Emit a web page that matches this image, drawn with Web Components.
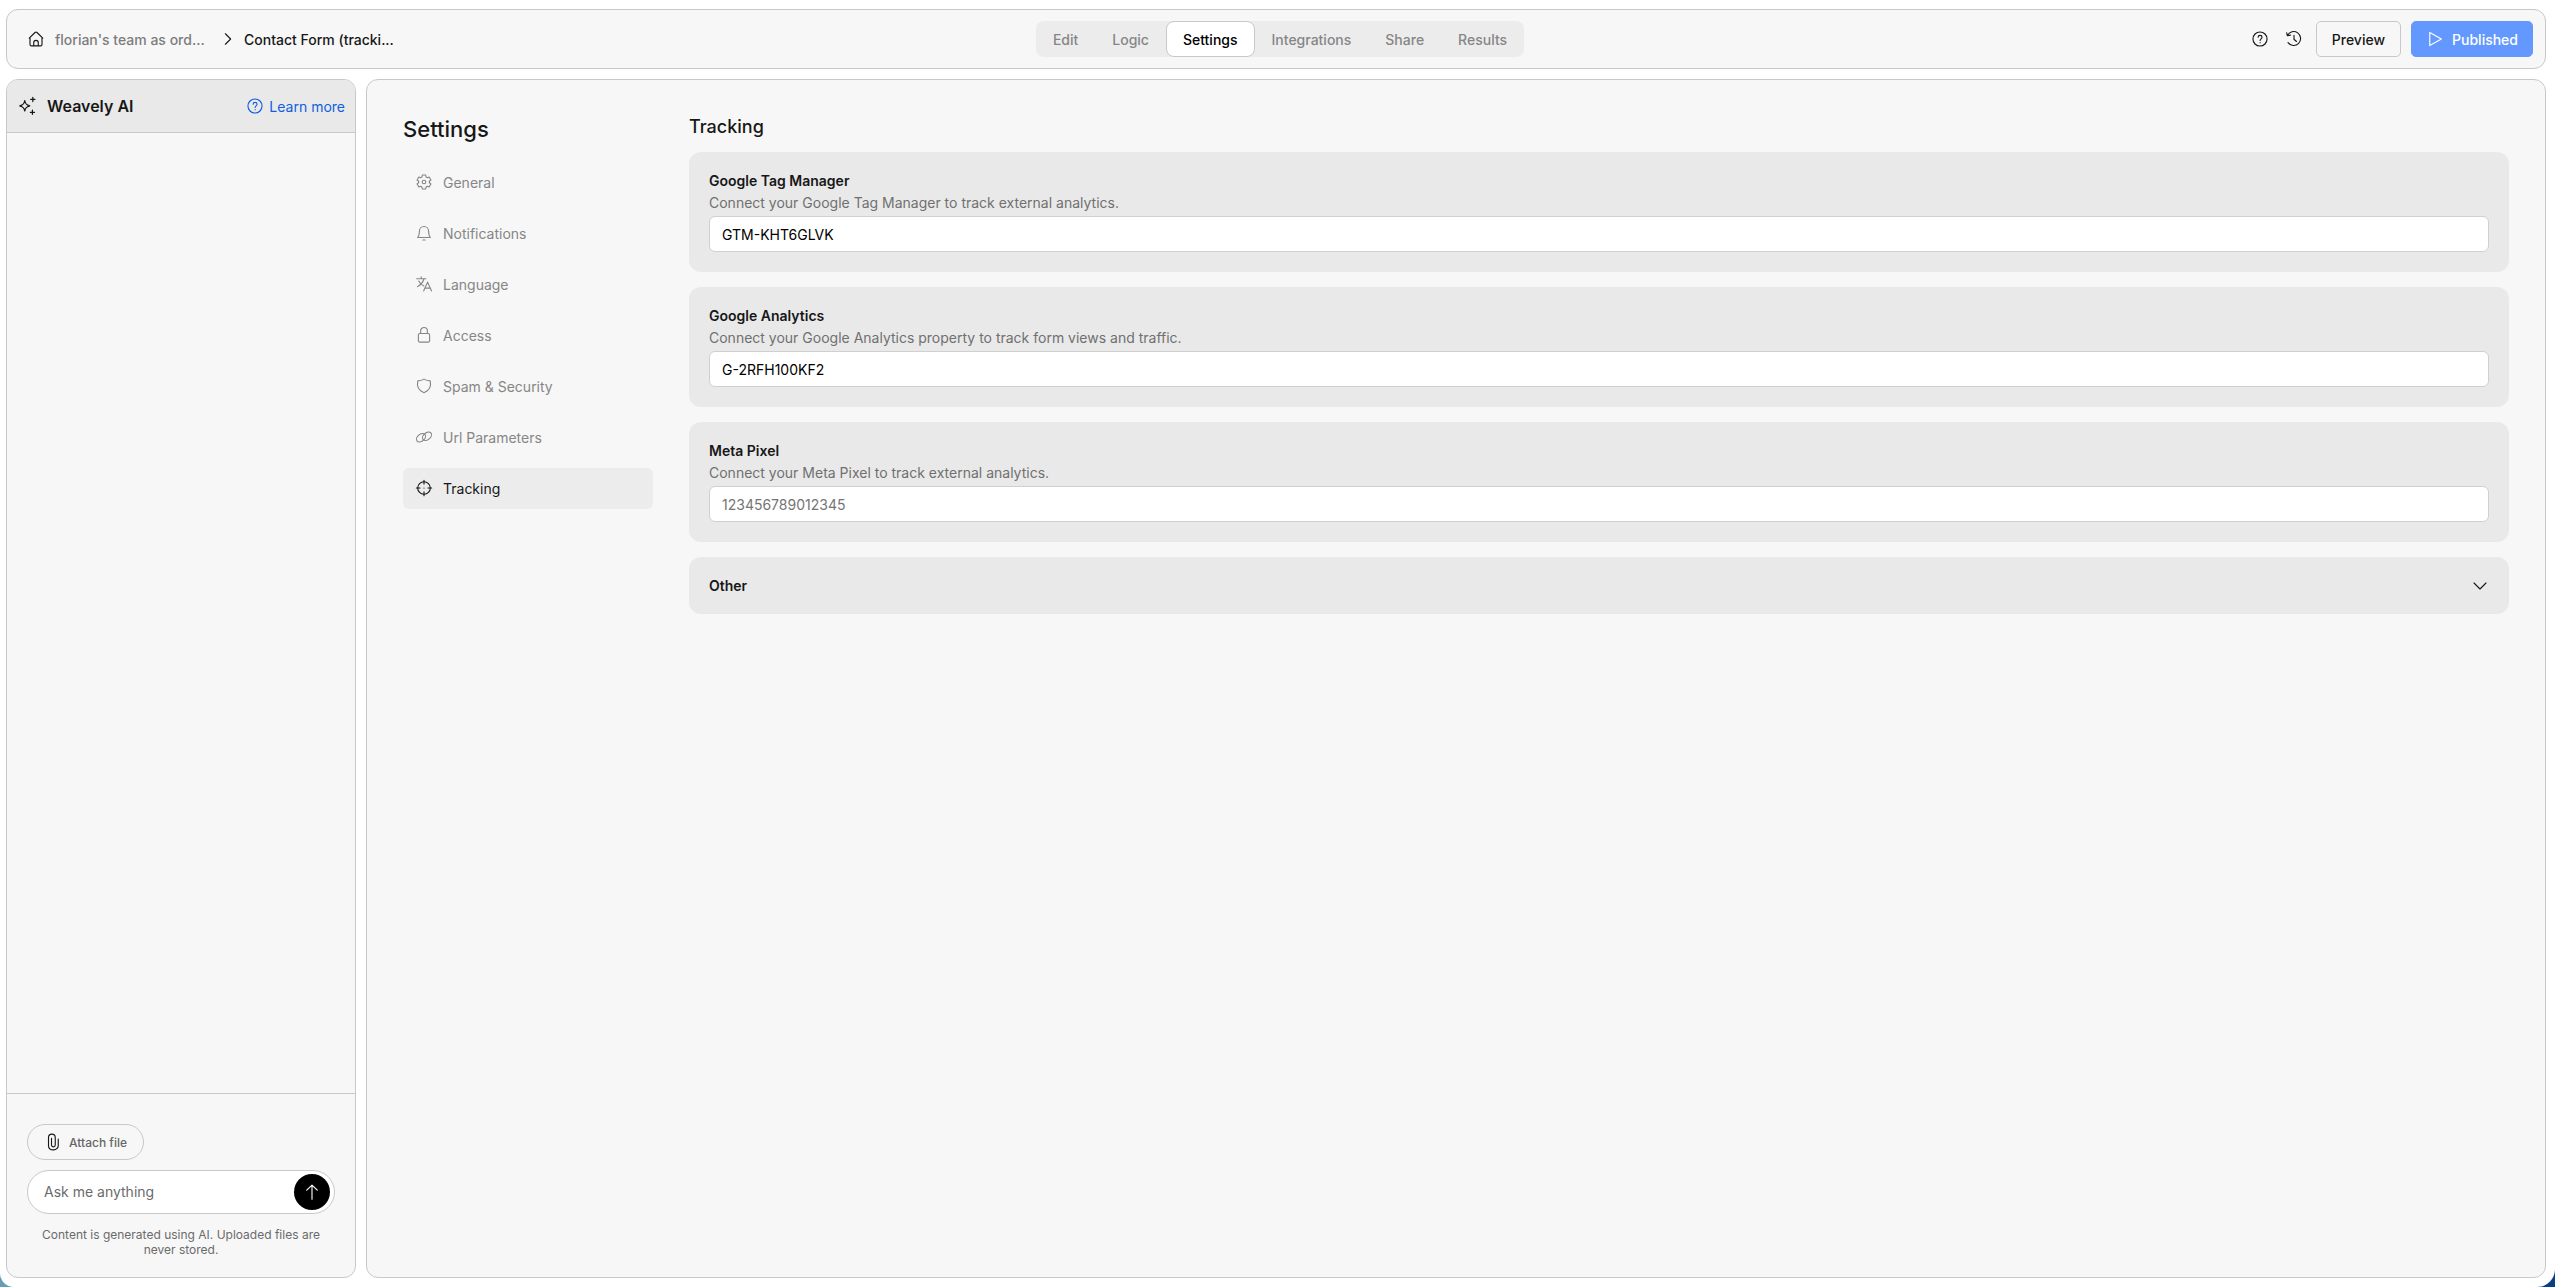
<!DOCTYPE html>
<html lang="en">
<head>
<meta charset="utf-8">
<meta name="viewport" content="width=device-width, initial-scale=1">
<title>Contact Form - Settings</title>
<style>
    html { height: 100%; background: linear-gradient(90deg, #669db6 50%, #0b3f85 50%); }
    body {
        margin: 0;
        min-height: 100%;
        display: flex;
        font-family: Inter, "Liberation Sans", sans-serif;
        font-size: 14px;
        line-height: 17px;
        color: #171717;
        --panel: #f7f7f7;
        --fill: #e9e9e9;
        --line: #c8c8c8;
        --muted: #868686;
    }
</style>
</head>
<body>
<form-app></form-app>

<script>
(function() {
    const ICONS = {
        home: '<path d="M3 10.8L10.7 3.3a1.9 1.9 0 0 1 2.6 0L21 10.8M4 10v9.3a1.9 1.9 0 0 0 1.9 1.9h12.2a1.9 1.9 0 0 0 1.9-1.9V10M9 21v-4.2a3 3 0 0 1 6 0V21"/>',
        right: '<path d="M8.5 5l7 7-7 7"/>',
        down: '<path d="M4 8l8 8 8-8"/>',
        help: '<circle cx="12" cy="12" r="9.4"/><path d="M9.5 9.7c0-3.3 5.2-3.3 5.2 0 0 2.2-2.5 2.1-2.5 4.3M12.2 16.6v.4"/>',
        history: '<path d="M3.2 7.2A9.3 9.3 0 1 1 4 16.8M2.2 3.6l.9 4 4.3-.8M12 7v5.3l3.3 3"/>',
        play: '<path d="M5 3.2v17.6L20.5 12z"/>',
        sparks: '<path d="M9.3 5.6c.8 4 1.9 5.2 6 6.2-4.1 1-5.2 2.2-6 6.2-.8-4-1.9-5.2-6-6.2 4.1-1 5.2-2.2 6-6.2zM19 1.6v5M16.5 4.1h5M18.5 17v5M16 19.5h5"/>',
        gear: '<path d="M9.3 5.32L9.68 2.69H14.32L14.7 5.32L16.43 6.33L18.91 5.33L21.23 9.35L19.13 11V13L21.23 14.65L18.91 18.67L16.43 17.67L14.7 18.68L14.32 21.31H9.68L9.3 18.68L7.57 17.67L5.09 18.67L2.77 14.65L4.87 13V11L2.77 9.35L5.09 5.33L7.57 6.33Z"/><circle cx="12" cy="12" r="2.4"/>',
        bell: '<path d="M3.6 18c1.7-1.8 2.3-3.6 2.3-8.5a6.1 6.1 0 0 1 12.2 0c0 4.9.6 6.7 2.3 8.5zM10.4 21.4h3.2"/>',
        language: '<path d="M2.2 5h12.2M8.3 2.5V5M12 5c-1.3 4.6-4.4 8.2-8.7 10.5M5 8c1.5 3.2 3.8 5.3 6.8 6.8M11.5 21.3L16.8 9.5l5.3 11.8M13.3 17.5h7"/>',
        lock: '<rect x="4.5" y="10" width="15" height="11.5" rx="2"/><path d="M7.5 10V6.500a4.500 4.500 0 0 1 9 0V10"/>',
        shield: '<path d="M12 2.8c2.3 1.5 4.9 2.2 8.3 2.4 1.6 7.3-1.8 13.2-8.3 15.8C5.5 18.4 2.1 12.5 3.7 5.2 7.1 5 9.7 4.3 12 2.8z"/>',
        link: '<ellipse cx="8" cy="13" rx="6.8" ry="4.6" transform="rotate(-40 8 13)"/><ellipse cx="16" cy="11" rx="6.8" ry="4.6" transform="rotate(-40 16 11)"/>',
        target: '<circle cx="12" cy="12" r="8.4"/><path d="M12 1.8v5M12 17.2v5M1.8 12h5M17.2 12h5M12 12v.1"/>',
        clip: '<path d="M19 8v8.5a6 6 0 0 1-6.5 6c-4 0-6.5-2.5-6.5-6V6a4.5 4.5 0 0 1 9 0v10a2.5 2.5 0 0 1-5 0V7"/>',
        up: '<path d="M12 21.5V3M5 9.5L12 2.8l7 6.7"/>'
    };

    function define(name, html, setup) {
        const template = document.createElement('template');
        template.innerHTML = html;
        customElements.define(name, class extends HTMLElement {
            constructor() {
                super();
                this.attachShadow({ mode: 'open' }).appendChild(template.content.cloneNode(true));
            }
            connectedCallback() {
                if (setup) setup(this, this.shadowRoot);
            }
        });
    }

    define('app-icon', `
        <style>
            :host { display: block; flex: none; width: 18px; height: 18px; }
            svg { display: block; width: 100%; height: 100%; fill: none; stroke: currentColor; stroke-width: 1.5; stroke-linecap: round; stroke-linejoin: round; }
        </style>
        <svg viewBox="0 0 24 24" aria-hidden="true"></svg>
    `, (host, root) => {
        root.querySelector('svg').innerHTML = ICONS[host.getAttribute('name')];
    });

    define('app-header', `
        <style>
            :host {
                display: grid; grid-template-columns: 1fr auto 1fr; align-items: center;
                padding: 11px 12px 11px 20px; border: 1px solid var(--line); border-radius: 12px; background: var(--panel);
            }
            nav, .actions { display: flex; align-items: center; }
            a { color: inherit; text-decoration: none; font-weight: 500; }
            .crumbs { gap: 7px; }
            .crumbs a { display: flex; align-items: center; gap: 10px; }
            .crumbs span { color: #7d7d7d; min-width: 150px; }
            .crumbs > app-icon { margin-left: 7px; }
            .tabs { border-radius: 8px; background: #ececec; color: var(--muted); }
            .tabs a { padding: 9px 16px 8px; border: 1px solid transparent; border-radius: 8px; }
            .tabs a[aria-current] { border-color: var(--line); background: #fff; color: #000; }
            .actions { justify-content: flex-end; gap: 10px; }
            button { display: flex; align-items: center; gap: 8px; height: 36px; padding: 0 15px; border: 1px solid var(--line); border-radius: 5px; background: none; font: inherit; font-weight: 500; color: inherit; }
            .tool { padding: 0 3px; border: 0; }
            .primary { border-color: #6399ff; background: #6399ff; color: #fff; padding: 0 14px; }
        </style>
        <nav class="crumbs" aria-label="Breadcrumb">
            <a href="#"><app-icon name="home"></app-icon><span>florian's team as ord...</span></a>
            <app-icon name="right"></app-icon>
            <a href="#form">Contact Form (tracki...</a>
        </nav>
        <nav class="tabs" aria-label="Form">
            <a href="#edit">Edit</a>
            <a href="#logic">Logic</a>
            <a href="#settings" aria-current="page">Settings</a>
            <a href="#integrations">Integrations</a>
            <a href="#share">Share</a>
            <a href="#results">Results</a>
        </nav>
        <div class="actions">
            <button class="tool" aria-label="Help"><app-icon name="help"></app-icon></button>
            <button class="tool" aria-label="History"><app-icon name="history"></app-icon></button>
            <button>Preview</button>
            <button class="primary"><app-icon name="play"></app-icon>Published</button>
        </div>
    `);

    define('ai-panel', `
        <style>
            :host { display: flex; flex-direction: column; border: 1px solid var(--line); border-radius: 12px; background: var(--panel); overflow: hidden; }
            header { display: flex; align-items: center; gap: 10px; padding: 16px 10px; background: var(--fill); border-bottom: 1px solid var(--line); }
            header > app-icon { width: 20px; height: 20px; }
            h2 { flex: 1; margin: 0; font-size: 16px; line-height: 20px; font-weight: 600; }
            a { display: flex; align-items: center; gap: 5px; color: #0f5fe0; text-decoration: none; }
            .log { flex: 1; }
            form { display: flex; flex-direction: column; align-items: flex-start; gap: 10px; padding: 30px 20px 20px; border-top: 1px solid var(--line); }
            button { display: flex; align-items: center; justify-content: center; font: inherit; }
            .attach { gap: 7px; height: 36px; padding: 0 16px; border: 1px solid var(--line); border-radius: 18px; background: none; color: #666; font-size: 12px; font-weight: 500; }
            .attach app-icon { color: #171717; }
            .ask { display: flex; align-items: center; align-self: stretch; padding: 3px 4px 3px 16px; border: 1px solid var(--line); border-radius: 22px; background: #fff; }
            input { flex: 1; min-width: 0; padding: 0 0 2px; border: 0; outline: 0; background: none; font: inherit; color: #000; }
            input::placeholder { color: #6b6b6b; }
            .send { flex: none; width: 36px; height: 36px; padding: 0; border: 0; border-radius: 50%; background: #000; color: #fff; }
            p { margin: 3px 0 0; padding: 0 10px; align-self: stretch; text-align: center; font-size: 12px; line-height: 15px; color: #6b6b6b; }
        </style>
        <header>
            <app-icon name="sparks"></app-icon>
            <h2>Weavely AI</h2>
            <a href="#learn"><app-icon name="help"></app-icon>Learn more</a>
        </header>
        <div class="log"></div>
        <form>
            <button type="button" class="attach"><app-icon name="clip"></app-icon>Attach file</button>
            <div class="ask">
                <input type="text" placeholder="Ask me anything" aria-label="Ask me anything">
                <button type="button" class="send" aria-label="Send"><app-icon name="up"></app-icon></button>
            </div>
            <p>Content is generated using AI. Uploaded files are never stored.</p>
        </form>
    `);

    define('settings-link', `
        <style>
            :host { display: block; }
            a { display: flex; align-items: center; gap: 10px; padding: 12px; border-radius: 6px; color: var(--muted); text-decoration: none; }
            app-icon { margin: -1px 0 0; }
            :host([active]) a { background: #ececec; color: #171717; }
        </style>
        <a><span><slot></slot></span></a>
    `, (host, root) => {
        const link = root.querySelector('a');
        const icon = document.createElement('app-icon');
        icon.setAttribute('name', host.getAttribute('icon'));
        link.prepend(icon);
        link.href = '#' + host.getAttribute('icon');
    });

    define('tracking-card', `
        <style>
            :host { display: flex; flex-direction: column; gap: 5px; padding: 20px; border-radius: 12px; background: var(--fill); }
            label { font-weight: 600; }
            p { margin: 0; color: #707070; }
            input { box-sizing: border-box; width: 100%; height: 36px; padding: 0 12px; border: 1px solid #d0d0d0; border-radius: 6px; background: #fff; font: inherit; color: #000; }
            input::placeholder { color: #757575; }
        </style>
        <label for="field"></label>
        <p id="hint"><slot></slot></p>
        <input id="field" type="text" aria-describedby="hint">
    `, (host, root) => {
        const input = root.querySelector('input');
        root.querySelector('label').textContent = host.getAttribute('label');
        input.value = host.getAttribute('value') || '';
        input.placeholder = host.getAttribute('placeholder') || '';
    });

    define('collapsed-card', `
        <style>
            :host { display: block; border-radius: 12px; background: var(--fill); }
            button { display: flex; align-items: center; justify-content: space-between; width: 100%; padding: 20px; border: 0; background: none; font: inherit; font-weight: 600; color: inherit; }
            app-icon { margin: -1px 0; }
        </style>
        <button aria-expanded="false"><span><slot></slot></span><app-icon name="down"></app-icon></button>
    `);

    define('settings-page', `
        <style>
            :host { display: flex; align-items: flex-start; gap: 36px; padding: 36px; border: 1px solid var(--line); border-radius: 12px; background: var(--panel); }
            h1, h2 { margin: 0; font-weight: 500; }
            h1 { font-size: 22px; line-height: 26px; margin-bottom: 10px; }
            h2 { font-size: 18px; line-height: 21px; }
            nav { flex: none; width: 250px; display: flex; flex-direction: column; gap: 10px; }
            section { flex: 1; display: flex; flex-direction: column; gap: 15px; }
        </style>
        <nav aria-label="Settings">
            <h1>Settings</h1>
            <settings-link icon="gear">General</settings-link>
            <settings-link icon="bell">Notifications</settings-link>
            <settings-link icon="language">Language</settings-link>
            <settings-link icon="lock">Access</settings-link>
            <settings-link icon="shield">Spam &amp; Security</settings-link>
            <settings-link icon="link">Url Parameters</settings-link>
            <settings-link icon="target" active>Tracking</settings-link>
        </nav>
        <section>
            <h2>Tracking</h2>
            <tracking-card label="Google Tag Manager" value="GTM-KHT6GLVK">Connect your Google Tag Manager to track external analytics.</tracking-card>
            <tracking-card label="Google Analytics" value="G-2RFH100KF2">Connect your Google Analytics property to track form views and traffic.</tracking-card>
            <tracking-card label="Meta Pixel" placeholder="123456789012345">Connect your Meta Pixel to track external analytics.</tracking-card>
            <collapsed-card>Other</collapsed-card>
        </section>
    `);

    define('form-app', `
        <style>
            :host {
                flex: 1; box-sizing: border-box; min-height: 100vh; display: flex; flex-direction: column; gap: 10px;
                padding: 9px 9px 9px 6px; background: #fff; border-radius: 0 0 18px 14px;
            }
            .body { flex: 1; display: flex; gap: 10px; }
            ai-panel { flex: none; box-sizing: border-box; width: 350px; }
            settings-page { flex: 1; }
        </style>
        <app-header></app-header>
        <div class="body">
            <ai-panel></ai-panel>
            <settings-page></settings-page>
        </div>
    `);
})();
</script>
</body>
</html>
